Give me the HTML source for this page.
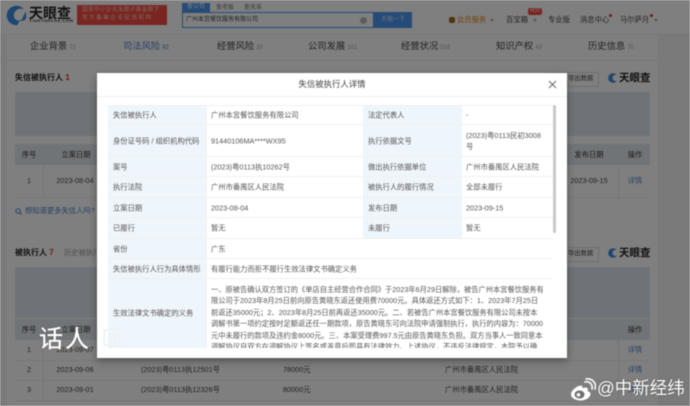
<!DOCTYPE html>
<html lang="zh">
<head>
<meta charset="utf-8">
<title>失信被执行人详情</title>
<style>
*{margin:0;padding:0;box-sizing:border-box}
html,body{width:690px;height:406px;overflow:hidden;background:#f4f4f4}
body{font-family:"Liberation Sans","Noto Sans CJK SC",sans-serif;color:#333}
#wrap{position:absolute;left:0;top:0;width:690px;height:406px;overflow:hidden;filter:blur(.45px)}
.a{position:absolute;white-space:nowrap;line-height:1}
.c{transform:translateX(-50%)}
.tab{font-size:9.3px;color:#444}
.tab small{font-size:6px;color:#aaa;margin-left:2px}
.th{font-size:7.3px;color:#333}
.td{font-size:7.3px;color:#444}
.lnk{font-size:7.3px;color:#4d86cc}
.blk{position:absolute;background:#dfe7ee}
.hdr{position:absolute;background:#e3e9ee}
.ln{position:absolute;background:#eceff2}
#ov{position:absolute;left:0;top:0;width:690px;height:406px;background:rgba(0,0,0,.5)}
#modal{position:absolute;left:97px;top:73px;width:470px;height:285px;background:#fff;overflow:hidden;box-shadow:0 3px 8px rgba(0,0,0,.35)}
#modal .tt{position:absolute;left:0;top:6px;width:470px;text-align:center;font-size:8.4px;line-height:10px;color:#444}
#modal .hr{position:absolute;left:0;top:23px;width:470px;height:1px;background:#f0f0f0}
.r{position:absolute;left:11px;width:445px;border-bottom:1px solid #eef1f4}
.l1,.l2{position:absolute;top:0;bottom:0;width:99px;background:#eef5fb}
.l1{left:0}.l2{left:255px}
.t{position:absolute;font-size:7.3px;color:#555;white-space:nowrap;line-height:11px;top:50%;transform:translateY(-50%)}
.para{position:absolute;font-size:7.25px;line-height:11.4px;color:#555;white-space:nowrap}
</style>
</head>
<body>
<div id="wrap">
  <div style="position:absolute;left:0;top:0;width:690px;height:34px;background:#fff"></div>
  <div style="position:absolute;left:7px;top:34px;width:651px;height:372px;background:#fff"></div>
  <div style="position:absolute;left:0;top:34px;width:690px;height:1px;background:#ececec"></div>
  <div style="position:absolute;left:7px;top:60px;width:651px;height:1px;background:#ececec"></div>

  <svg class="a" style="left:6px;top:5px" width="21" height="21" viewBox="0 0 21 21"><circle cx="10.500" cy="10.500" r="9.800" fill="#3d8ee0"/><path d="M20 5C15 2 9 4 8 9c-1 4 2 7 7 7 2 0 4-1 5-2-1 4-5 6.500-9 6.500" fill="#fff"/><path d="M20 6c-5-2-9 0-9.500 4-.5 3 2 5 5 5" fill="#fff"/></svg>
  <div class="a" style="left:29px;top:6px;font-size:14px;font-weight:bold;color:#222">天眼查</div>
  <div class="a" style="left:29px;top:20px;font-size:4.800px;font-weight:bold;color:#444;letter-spacing:.5px">TianYancha.com</div>
  <div style="position:absolute;left:77px;top:5px;width:90px;height:20px;background:#f24c44"></div>
  <div class="a" style="left:82px;top:7.500px;font-size:5.800px;color:#ffcdbb;letter-spacing:.15px">国家中小企业发展子基金旗下</div>
  <div class="a" style="left:82px;top:16px;font-size:5.800px;color:#ffcdbb;letter-spacing:1.250px">官方备案企业征信机构</div>

  <div style="position:absolute;left:182px;top:3px;width:28px;height:9px;background:#4a96ee"></div>
  <div class="a" style="left:187px;top:4px;font-size:6px;color:#fff">查公司</div>
  <div class="a" style="left:216px;top:4.500px;font-size:6px;color:#777">查老板</div>
  <div class="a" style="left:244px;top:4.500px;font-size:6px;color:#777">查关系</div>
  <div style="position:absolute;left:182px;top:12px;width:192px;height:16px;border:1px solid #4a96ee;background:#fff"></div>
  <div class="a" style="left:186px;top:17px;font-size:6px;color:#444">广州本宫餐饮服务有限公司</div>
  <div style="position:absolute;left:360px;top:17px;width:7px;height:7px;border-radius:50%;background:#bbb"></div>
  <div style="position:absolute;left:374px;top:12px;width:38px;height:16px;background:#4a96ee"></div>
  <div class="a" style="left:381px;top:17px;font-size:6px;color:#cfe3ff">天眼一下</div>

  <div style="position:absolute;left:449px;top:17px;width:6px;height:6px;border-radius:2px;background:#a06818"></div>
  <div class="a" style="left:457px;top:16px;font-size:7.300px;color:#e58a1e">会员服务</div>
  <div style="position:absolute;left:490px;top:19px;border:2px solid transparent;border-top:3px solid #aaa"></div>
  <div class="a" style="left:506px;top:16px;font-size:7.300px;color:#444">百宝箱</div>
  <div style="position:absolute;left:533px;top:19px;border:2px solid transparent;border-top:3px solid #aaa"></div>
  <div style="position:absolute;left:528px;top:8px;width:14px;height:7px;background:#f04a40;border-radius:2px"></div>
  <div class="a" style="left:530px;top:9px;font-size:5px;color:#fff">HOT</div>
  <div class="a" style="left:548px;top:16px;font-size:7.300px;color:#444">专业版</div>
  <div class="a" style="left:580px;top:16px;font-size:7.300px;color:#444">消息中心</div>
  <div style="position:absolute;left:609px;top:14px;width:3px;height:3px;border-radius:50%;background:#e0302a"></div>
  <div class="a" style="left:620px;top:16px;font-size:7.300px;color:#444">马尔萨月</div>
  <div style="position:absolute;left:650px;top:14px;width:3px;height:3px;border-radius:50%;background:#e0302a"></div>
  <div style="position:absolute;left:654px;top:19px;border:2px solid transparent;border-top:3px solid #aaa"></div>

  <div class="a tab" style="left:30px;top:42px">企业背景<small>72</small></div>
  <div class="a tab" style="left:123px;top:42px;color:#4d86cc">司法风险<small style="color:#4d86cc">92</small></div>
  <div class="a tab" style="left:217px;top:42px">经营风险<small>30</small></div>
  <div class="a tab" style="left:308px;top:42px">公司发展<small>101</small></div>
  <div class="a tab" style="left:401px;top:42px">经营状况<small>516</small></div>
  <div class="a tab" style="left:496px;top:42px">知识产权<small>49</small></div>
  <div class="a tab" style="left:588px;top:42px">历史信息<small>70</small></div>

  <div class="a" style="left:15px;top:74px;font-size:8px;font-weight:bold;color:#222">失信被执行人 <span style="color:#e0302a">1</span></div>
  <div style="position:absolute;left:545px;top:72px;width:54px;height:15px;border:1px solid #ddd"></div>
  <div class="a" style="left:568px;top:76px;font-size:6.300px;color:#444">导出数据</div>
  <svg class="a" style="left:608px;top:73px" width="10" height="10" viewBox="0 0 10 10"><circle cx="5" cy="5" r="4.800" fill="#3d8ee0"/><path d="M10 2.500C7 1 4.500 2.500 4.500 5S7 8.500 10 7.500" fill="#fff"/></svg>
  <div class="a" style="left:619px;top:73px;font-size:10.500px;font-weight:bold;color:#222">天眼查</div>

  <div class="blk" style="left:15px;top:92px;width:635px;height:44px"></div>
  <div class="hdr" style="left:15px;top:144px;width:635px;height:21px"></div>
  <div class="ln" style="left:15px;top:197px;width:635px;height:1px"></div>
  <div class="ln" style="left:43px;top:165px;width:1px;height:32px"></div>
  <div class="ln" style="left:618px;top:165px;width:1px;height:32px"></div>
  <div class="a th c" style="left:29px;top:151px">序号</div>
  <div class="a th c" style="left:76px;top:151px">立案日期</div>
  <div class="a th c" style="left:589px;top:151px">发布日期</div>
  <div class="a th c" style="left:635px;top:151px">操作</div>
  <div class="a td c" style="left:29px;top:177px">1</div>
  <div class="a td c" style="left:75px;top:177px">2023-08-04</div>
  <div class="a td c" style="left:589px;top:177px">2023-09-15</div>
  <div class="a lnk c" style="left:635px;top:177px">详情</div>
  <svg class="a" style="left:15px;top:208px" width="7" height="7" viewBox="0 0 7 7"><circle cx="3" cy="3" r="2.200" fill="none" stroke="#4d86cc"/><path d="M4.600 4.600L6.500 6.500" stroke="#4d86cc"/></svg>
  <div class="a" style="left:25px;top:207px;font-size:7.300px;color:#4d86cc">想知道更多失信人吗?</div>

  <div class="a" style="left:15px;top:249px;font-size:8px;font-weight:bold;color:#222">被执行人 <span style="color:#e0302a">7</span></div>
  <div class="a" style="left:64px;top:249px;font-size:7.300px;color:#999">历史被执行人</div>
  <div style="position:absolute;left:545px;top:247px;width:54px;height:15px;border:1px solid #ddd"></div>
  <div class="a" style="left:568px;top:251px;font-size:6.300px;color:#444">导出数据</div>
  <svg class="a" style="left:608px;top:248px" width="10" height="10" viewBox="0 0 10 10"><circle cx="5" cy="5" r="4.800" fill="#3d8ee0"/><path d="M10 2.500C7 1 4.500 2.500 4.500 5S7 8.500 10 7.500" fill="#fff"/></svg>
  <div class="a" style="left:619px;top:248px;font-size:10.500px;font-weight:bold;color:#222">天眼查</div>

  <div class="blk" style="left:15px;top:267px;width:635px;height:51px"></div>
  <div class="hdr" style="left:15px;top:319px;width:635px;height:21px"></div>
  <div class="ln" style="left:15px;top:360px;width:635px;height:1px"></div>
  <div class="ln" style="left:15px;top:380px;width:635px;height:1px"></div>
  <div class="ln" style="left:15px;top:400px;width:635px;height:1px"></div>
  <div class="ln" style="left:43px;top:340px;width:1px;height:60px"></div>
  <div class="ln" style="left:618px;top:340px;width:1px;height:60px"></div>
  <div class="a th c" style="left:29px;top:326px">序号</div>
  <div class="a th c" style="left:76px;top:326px">立案日期</div>
  <div class="a th c" style="left:635px;top:326px">操作</div>
  <div class="a td c" style="left:29px;top:346px">1</div>
  <div class="a td c" style="left:29px;top:366px">2</div>
  <div class="a td c" style="left:29px;top:386px">3</div>
  <div class="a td c" style="left:75px;top:346px">2023-09-07</div>
  <div class="a td c" style="left:75px;top:366px">2023-09-06</div>
  <div class="a td c" style="left:75px;top:386px">2023-09-01</div>
  <div class="a td" style="left:141px;top:366px">(2023)粤0113执12501号</div>
  <div class="a td" style="left:141px;top:386px">(2023)粤0113执12326号</div>
  <div class="a td" style="left:283px;top:366px">78000元</div>
  <div class="a td" style="left:283px;top:386px">80000元</div>
  <div class="a td" style="left:445px;top:366px">广州市番禺区人民法院</div>
  <div class="a td" style="left:445px;top:386px">广州市番禺区人民法院</div>
  <div class="a lnk c" style="left:635px;top:346px">详情</div>
  <div class="a lnk c" style="left:635px;top:366px">详情</div>
  <div class="a lnk c" style="left:635px;top:386px">详情</div>

  <div id="ov"></div>

  <div class="a" style="left:39px;top:328px;font-size:24px;color:#fff;letter-spacing:2px;-webkit-text-stroke:.3px #fff;text-shadow:0 0 2px rgba(0,0,0,.3)">话人</div>

  <div id="modal">
    <div class="tt">失信被执行人详情</div>
    <div class="hr"></div>
    <svg style="position:absolute;left:451px;top:7px" width="9" height="9" viewBox="0 0 9 9"><path d="M1 1l7 7M8 1L1 8" stroke="#666" stroke-width="1" fill="none"/></svg>

    <div class="r" style="top:32px;height:20px;border-top:1px solid #eef1f4"><div class="l1"></div><div class="l2"></div>
      <div class="t" style="left:5px">失信被执行人</div><div class="t" style="left:103px">广州本宫餐饮服务有限公司</div><div class="t" style="left:260px">法定代表人</div><div class="t" style="left:358px">-</div></div>
    <div class="r" style="top:52px;height:32px"><div class="l1"></div><div class="l2"></div>
      <div class="t" style="left:5px">身份证号码 / 组织机构代码</div><div class="t" style="left:103px">91440106MA****WX95</div><div class="t" style="left:260px">执行依据文号</div><div class="t" style="left:358px">(2023)粤0113民初3008<br>号</div></div>
    <div class="r" style="top:84px;height:20px"><div class="l1"></div><div class="l2"></div>
      <div class="t" style="left:5px">案号</div><div class="t" style="left:103px">(2023)粤0113执10262号</div><div class="t" style="left:260px">做出执行依据单位</div><div class="t" style="left:358px">广州市番禺区人民法院</div></div>
    <div class="r" style="top:104px;height:21px"><div class="l1"></div><div class="l2"></div>
      <div class="t" style="left:5px">执行法院</div><div class="t" style="left:103px">广州市番禺区人民法院</div><div class="t" style="left:260px">被执行人的履行情况</div><div class="t" style="left:358px">全部未履行</div></div>
    <div class="r" style="top:125px;height:20px"><div class="l1"></div><div class="l2"></div>
      <div class="t" style="left:5px">立案日期</div><div class="t" style="left:103px">2023-08-04</div><div class="t" style="left:260px">发布日期</div><div class="t" style="left:358px">2023-09-15</div></div>
    <div class="r" style="top:145px;height:21px"><div class="l1"></div><div class="l2"></div>
      <div class="t" style="left:5px">已履行</div><div class="t" style="left:103px">暂无</div><div class="t" style="left:260px">未履行</div><div class="t" style="left:358px">暂无</div></div>
    <div class="r" style="top:166px;height:20px"><div class="l1"></div>
      <div class="t" style="left:5px">省份</div><div class="t" style="left:103px">广东</div></div>
    <div class="r" style="top:186px;height:20px"><div class="l1"></div>
      <div class="t" style="left:5px">失信被执行人行为具体情形</div><div class="t" style="left:103px">有履行能力而拒不履行生效法律文书确定义务</div></div>
    <div class="r" style="top:206px;height:69px;border-bottom:0"><div class="l1"></div>
      <div class="t" style="left:5px;top:34px">生效法律文书确定的义务</div></div>
    <div style="position:absolute;left:114px;top:206px;width:340px;height:69px;overflow:hidden">
      <div class="para" style="left:0;top:5px">一、原被告确认双方签订的《单店自主经营合作合同》于2023年6月29日解除&#xFF0C;被告广州本宫餐饮服务有<br>限公司于2023年8月25日前向原告黄晓东返还使用费70000元。具体返还方式如下&#xFF1A;1、2023年7月25日<br>前返还35000元&#xFF1B;2、2023年8月25日前再返还35000元。二、若被告广州本宫餐饮服务有限公司未按本<br>调解书第一项约定按时足额返还任一期款项&#xFF0C;原告黄晓东可向法院申请强制执行&#xFF0C;执行的内容为&#xFF1A;70000<br>元中未履行的款项及违约金8000元。三、本案受理费997.5元由原告黄晓东负担。双方当事人一致同意本<br>调解协议自双方在调解协议上签名或盖章后即具有法律效力。上述协议&#xFF0C;不违反法律规定&#xFF0C;本院予以确</div>
    </div>
    <div style="position:absolute;left:456px;top:32px;width:3px;height:128px;background:#c8c8c8;border-radius:2px"></div>
    <div class="a" style="left:5px;top:256px;font-size:20px;color:#eef2f6">回</div>
  </div>

  <svg class="a" style="left:570px;top:378px" width="26" height="23" viewBox="0 0 26 23">
    <path d="M9.500 7.500C5 9.500 1 13 1 16.500 1 20 5.500 22.500 10.500 22.500c6 0 10-3.500 10-6.500 0-2-2-2.500-3-3 .8-2 .5-3.500-2-3.500-1.200 0-2.500.5-3 1 .5-2-.5-3.500-3-2.500z" fill="#fff"/>
    <ellipse cx="9.500" cy="16.500" rx="5" ry="4" fill="#6f6f6f"/>
    <circle cx="8.500" cy="16.800" r="1.800" fill="#fff"/>
    <path d="M15 4c4-1.200 8 2 7 7" stroke="#fff" stroke-width="1.600" fill="none" stroke-linecap="round"/>
    <path d="M16 1c6-1 11 4 9 10" stroke="#fff" stroke-width="1.600" fill="none" stroke-linecap="round"/>
  </svg>
  <div class="a" style="left:597px;top:380px;font-size:17.500px;color:#fff;text-shadow:0 0 2px rgba(0,0,0,.35)">@中新经纬</div>
</div>
</body>
</html>
